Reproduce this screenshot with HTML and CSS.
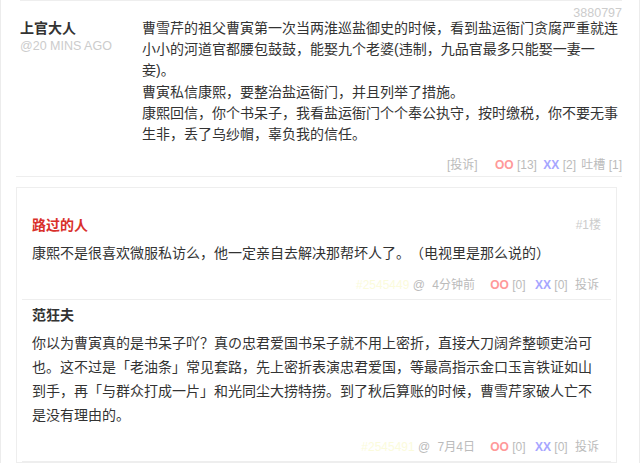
FILE: index.html
```html
<!DOCTYPE html>
<html>
<head>
    <meta charset="UTF-8">
    <meta name="viewport" content="width=device-width, initial-scale=1.0">
    <title>吐槽</title>
    <link rel="stylesheet" href="styles.css">
</head>
<body>
    <div class="page">
        <div class="prev-edge"></div>

        <div class="post">
            <div class="author">
                <strong>上官大人</strong>
                <small>@20 MINS AGO</small>
            </div>
            <div class="post-body">
                <div class="post-id">3880797</div>
                <div class="post-text">
                    <p>曹雪芹的祖父曹寅第一次当两淮巡盐御史的时候，看到盐运衙门贪腐严重就连小小的河道官都腰包鼓鼓，能娶九个老婆(违制，九品官最多只能娶一妻一妾)。</p>
                    <p>曹寅私信康熙，要整治盐运衙门，并且列举了措施。</p>
                    <p>康熙回信，你个书呆子，我看盐运衙门个个奉公执守，按时缴税，你不要无事生非，丢了乌纱帽，辜负我的信任。</p>
                </div>
                <div class="vote">
                    <span class="report">[投诉]</span>
                    <span class="oo">OO</span> [13]
                    <span class="xx">XX</span> [2]
                    <span class="tucao-link">吐槽 [1]</span>
                </div>
            </div>
        </div>

        <div class="tucao-box">
            <div class="tucao-row">
                <div class="tucao-head">
                    <span class="tucao-author hot">路过的人</span>
                    <span class="floor">#1楼</span>
                </div>
                <div class="tucao-content">康熙不是很喜欢微服私访么，他一定亲自去解决那帮坏人了。（电视里是那么说的）</div>
                <div class="tucao-meta">
                    <span class="tucao-id">#2545449</span>
                    <span class="at">@</span>
                    <span class="time">4分钟前</span>
                    <span class="oo">OO</span> [0]
                    <span class="xx">XX</span> [0]
                    <span class="report">投诉</span>
                </div>
            </div>
            <div class="tucao-row">
                <div class="tucao-head">
                    <span class="tucao-author">范狂夫</span>
                </div>
                <div class="tucao-content">你以为曹寅真的是书呆子吖？真の忠君爱国书呆子就不用上密折，直接大刀阔斧整顿吏治可也。这不过是「老油条」常见套路，先上密折表演忠君爱国，等最高指示金口玉言铁证如山到手，再「与群众打成一片」和光同尘大捞特捞。到了秋后算账的时候，曹雪芹家破人亡不是没有理由的。</div>
                <div class="tucao-meta">
                    <span class="tucao-id">#2545491</span>
                    <span class="at">@</span>
                    <span class="time">7月4日</span>
                    <span class="oo">OO</span> [0]
                    <span class="xx">XX</span> [0]
                    <span class="report">投诉</span>
                </div>
            </div>
        </div>
    </div>
</body>
</html>
```

FILE: styles.css
```css
body {
    margin: 0;
    font-family: 'Liberation Sans', Arial, 'Noto Sans CJK SC', sans-serif;
    font-size: 14px;
    color: #333;
    background: #fff;
    text-spacing-trim: space-all;
}
.page {
    width: 606px;
    height: 463px;
    padding: 0 17px 0 15px;
    border-left: 1px solid #ececec;
    border-right: 1px solid #ececec;
    overflow: hidden;
}
.prev-edge {
    margin-left: 4px;
    border-top: 1px solid #eee;
}
.post {
    display: flex;
    border-bottom: 1px solid #eee;
}
.author {
    width: 122px;
    padding: 17px 0 0 4px;
}
.author strong {
    display: block;
    line-height: 20px;
    font-weight: bold;
}
.author small {
    display: block;
    margin-top: 1px;
    font-size: 12.5px;
    line-height: 14px;
    color: #ccc;
}
.post-body {
    width: 480px;
}
.post-id {
    margin-top: 6px;
    margin-bottom: -1px;
    text-align: right;
    font-size: 12.5px;
    line-height: 12px;
    color: #ccc;
}
.post-text p {
    margin: 0;
    line-height: 21.2px;
}
.vote {
    margin-top: 10px;
    padding-bottom: 1px;
    text-align: right;
    font-size: 12px;
    line-height: 20px;
    color: #bbb;
}
.vote .report {
    margin-right: 14px;
}
.vote .xx {
    margin-left: 3px;
}
.vote .tucao-link {
    margin-left: 2px;
}
.oo {
    font-weight: bold;
    color: #f99;
}
.xx {
    font-weight: bold;
    color: #a6a6ff;
}
.tucao-box {
    margin: 10px 5px 0 0;
    padding: 22px 5px 0;
    border: 1px solid #eee;
}
.tucao-row {
    padding: 5px 12px 4px 10px;
    border-bottom: 1px solid #eee;
}
.tucao-head {
    display: flex;
    justify-content: space-between;
    line-height: 20px;
}
.tucao-author {
    font-weight: bold;
}
.tucao-author.hot {
    color: #d9302b;
}
.floor {
    margin-right: -2px;
    font-size: 12px;
    color: #ccc;
}
.tucao-content {
    margin-top: 6px;
    line-height: 24px;
}
.tucao-meta {
    margin-top: 10px;
    text-align: right;
    font-size: 12px;
    line-height: 20px;
    color: #bbb;
}
.tucao-id {
    color: #fbfbdc;
}
.tucao-meta .time {
    margin-left: 4px;
    margin-right: 12px;
}
.tucao-meta .xx {
    margin-left: 6px;
}
.tucao-meta .report {
    margin-left: 4px;
}
```
